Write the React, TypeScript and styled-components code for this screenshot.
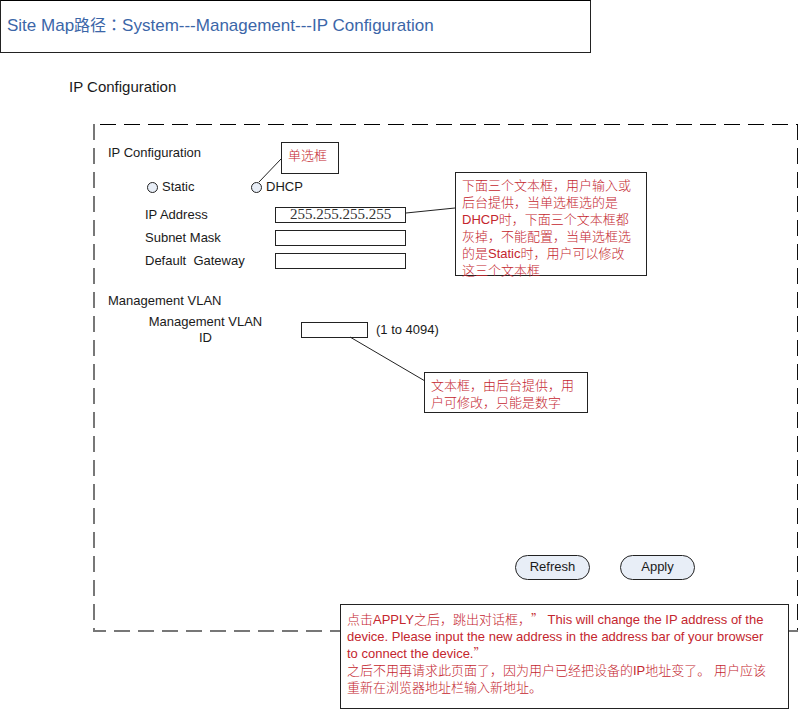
import React from "react";
import styled, { createGlobalStyle } from "styled-components";

const GlobalStyle = createGlobalStyle`
  * { box-sizing: border-box; }
  body {
    margin: 0;
    background: #fff;
    color: #1a1a1a;
    font: 13px/16px "Liberation Sans", "Noto Sans CJK SC", sans-serif;
    text-spacing-trim: space-all;
  }
`;

const SiteMap = styled.header`
  max-width: 591px;
  padding: 15px 6px 16px;
  border: 1px solid #222;
  border-top-color: #000;
  color: #3b66a8;
  font-size: 17px;
  line-height: 20px;
  white-space: nowrap;
`;

const Han = styled.span`
  font-family: "Noto Sans CJK TC", sans-serif;
  font-size: 16px;
  line-height: 1;
`;

const PageTitle = styled.h1`
  margin: 24px 0 27px 69px;
  font-size: 15px;
  font-weight: 400;
  line-height: 20px;
`;

const Panel = styled.main`
  --dash: 0 16px, transparent 16px 24px;
  position: relative;
  display: flex;
  flex-direction: column;
  min-height: 508px;
  margin-left: 93px;
  padding: 19px 103px 52px 15px;
  background:
    repeating-linear-gradient(90deg, #000 var(--dash)) 7px 0 / 100% 1px no-repeat,
    repeating-linear-gradient(90deg, #777 var(--dash)) -3px 100% / 200% 2px no-repeat,
    repeating-linear-gradient(180deg, #777 var(--dash)) 0 0 / 2px 100% no-repeat,
    repeating-linear-gradient(180deg, #111 var(--dash)) 100% 0 / 1px 100% no-repeat;
`;

const SectionTitle = styled.h2`
  margin: 0;
  padding-top: 1px;
  font-size: 13px;
  font-weight: 400;
  line-height: 18px;
`;

const RadioRow = styled.div`
  display: grid;
  grid-template-columns: 104px auto;
  justify-content: start;
  margin: 17px 0 8px 39px;
`;

const RadioLabel = styled.label`
  display: flex;
  align-items: center;
  gap: 4px;
`;

const Radio = styled.input`
  appearance: none;
  width: 11px;
  height: 11px;
  margin: 0;
  border: 1px solid #222;
  border-radius: 50%;
  background: #e8eef7;
  &:checked { background: #3b66a8; }
`;

const Fields = styled.div`
  display: grid;
  grid-template-columns: 130px 131px;
  grid-auto-rows: 23px;
  align-items: center;
  margin: 0 0 19px 37px;
`;

const FieldLabel = styled.label`
  white-space: pre;
`;

const TextBox = styled.input`
  width: 100%;
  height: 16px;
  padding: 0;
  border: 1px solid #222;
  border-radius: 0;
  background: #fff;
  color: #333;
  text-align: center;
  font: 15px/14px "Liberation Serif", serif;
`;

const VlanRow = styled.div`
  display: grid;
  grid-template-columns: 146px 67px auto;
  justify-content: start;
  align-items: center;
  column-gap: 8px;
  margin: 4px 0 0 39px;
`;

const VlanLabel = styled.label`
  width: 117px;
  text-align: center;
`;

const Actions = styled.div`
  display: flex;
  justify-content: flex-end;
  gap: 30px;
  margin-top: auto;
`;

const Button = styled.button`
  width: 75px;
  height: 25px;
  padding: 0 0 2px;
  border: 1px solid #222;
  border-radius: 13px;
  background: #e8eef7;
  color: #1a1a1a;
  font: inherit;
`;

const noteBox = `
  border: 1px solid #222;
  background: #fff;
  color: #c4262e;
  line-height: 17px;
  white-space: nowrap;
`;

const Callout = styled.aside<{ $x: number; $y: number; $w: number; $h: number }>`
  ${noteBox}
  position: absolute;
  left: ${(p) => p.$x}px;
  top: ${(p) => p.$y}px;
  width: ${(p) => p.$w}px;
  height: ${(p) => p.$h}px;
  padding: 4px 6px;
`;

const ApplyNote = styled.aside`
  ${noteBox}
  position: relative;
  margin: -28px 9px 0 340px;
  padding: 6px 6px 12px;
`;

const Line = styled.span`
  display: block;
  font-weight: 300;
`;

const WideQuote = styled.span`
  font-family: "Noto Sans CJK SC", sans-serif;
  line-height: 1;
`;

const Connectors = styled.svg`
  position: absolute;
  left: 0;
  top: 0;
  pointer-events: none;
`;

const fields = [
  { id: "ip", label: "IP Address", value: "255.255.255.255" },
  { id: "mask", label: "Subnet Mask", value: "" },
  { id: "gateway", label: "Default  Gateway", value: "" },
];

const Lines = ({ text }: { text: string[] }) => (
  <>
    {text.map((t) => (
      <Line key={t}>{t}</Line>
    ))}
  </>
);

export default function App() {
  return (
    <>
      <GlobalStyle />
      <SiteMap>
        Site Map<Han lang="zh-TW">路径：</Han>System---Management---IP Configuration
      </SiteMap>
      <PageTitle>IP Configuration</PageTitle>
      <Panel>
        <SectionTitle>IP Configuration</SectionTitle>
        <RadioRow role="radiogroup" aria-label="IP Configuration">
          <RadioLabel>
            <Radio type="radio" name="mode" value="static" />
            Static
          </RadioLabel>
          <RadioLabel>
            <Radio type="radio" name="mode" value="dhcp" />
            DHCP
          </RadioLabel>
        </RadioRow>
        <Fields>
          {fields.map((f) => (
            <React.Fragment key={f.id}>
              <FieldLabel htmlFor={f.id}>{f.label}</FieldLabel>
              <TextBox id={f.id} type="text" defaultValue={f.value} />
            </React.Fragment>
          ))}
        </Fields>
        <SectionTitle>Management VLAN</SectionTitle>
        <VlanRow>
          <VlanLabel htmlFor="vlan">Management VLAN ID</VlanLabel>
          <TextBox id="vlan" type="text" />
          <span>(1 to 4094)</span>
        </VlanRow>
        <Actions>
          <Button type="button">Refresh</Button>
          <Button type="button">Apply</Button>
        </Actions>
        <Connectors width="500" height="300" fill="none" stroke="#222" aria-hidden="true">
          <path d="M188 35 L166 58 M313 89 L362 84 M257 213 L332 257" />
        </Connectors>
        <Callout $x={188} $y={18} $w={58} $h={32}>
          <Lines text={["单选框"]} />
        </Callout>
        <Callout $x={362} $y={48} $w={192} $h={104}>
          <Lines
            text={[
              "下面三个文本框，用户输入或",
              "后台提供，当单选框选的是",
              "DHCP时，下面三个文本框都",
              "灰掉，不能配置，当单选框选",
              "的是Static时，用户可以修改",
              "这三个文本框",
            ]}
          />
        </Callout>
        <Callout $x={331} $y={248} $w={164} $h={41}>
          <Lines text={["文本框，由后台提供，用", "户可修改，只能是数字"]} />
        </Callout>
      </Panel>
      <ApplyNote>
        <Line>
          点击APPLY之后，跳出对话框，<WideQuote>”</WideQuote> This will change the IP address of the
        </Line>
        <Line>device. Please input the new address in the address bar of your browser</Line>
        <Line>
          to connect the device.<WideQuote>”</WideQuote>
        </Line>
        <Lines
          text={[
            "之后不用再请求此页面了，因为用户已经把设备的IP地址变了。 用户应该",
            "重新在浏览器地址栏输入新地址。",
          ]}
        />
      </ApplyNote>
    </>
  );
}
